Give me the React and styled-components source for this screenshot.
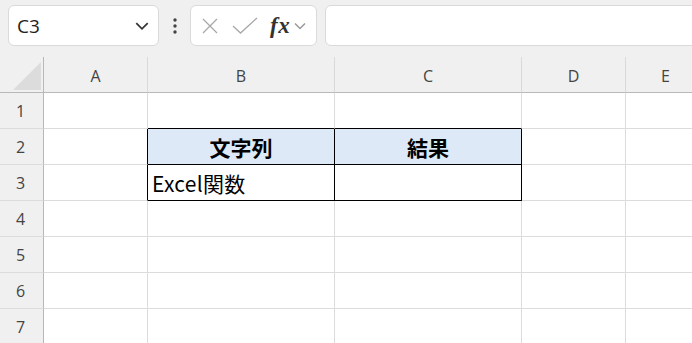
import React from "react";
import styled, { createGlobalStyle } from "styled-components";

const GlobalStyle = createGlobalStyle`
  html, body {
    margin: 0;
    padding: 0;
    background: #ffffff;
    overflow: hidden;
  }
  body {
    font-family: "Open Sans", "Noto Sans", sans-serif;
  }
`;

const columns = ["A", "B", "C", "D", "E"];
const colWidths = [104, 187, 187, 104, 80];
const rowCount = 7;

// B2:C3 is the boxed table
const inTable = (r, c) => r >= 2 && r <= 3 && c >= 1 && c <= 2;

const cellData = {
  "2-1": { text: "文字列", head: true },
  "2-2": { text: "結果", head: true },
  "3-1": { text: "Excel関数" },
};

const Page = styled.div`
  width: 692px;
  height: 343px;
  overflow: hidden;
  background: #ffffff;
`;

const Toolbar = styled.div`
  height: 57px;
  box-sizing: border-box;
  padding: 5px 0 0 8px;
  background: #f0f0f0;
  display: flex;
  align-items: flex-start;
`;

const Box = styled.div`
  height: 41px;
  box-sizing: border-box;
  background: #ffffff;
  border: 1px solid #dadada;
  border-radius: 6px;
  display: flex;
  align-items: center;
`;

const NameBox = styled(Box)`
  width: 151px;
  padding: 0 8px 0 8px;
  justify-content: space-between;
  font-size: 19px;
  color: #222;
`;

const Dots = styled.div`
  width: 31px;
  height: 41px;
  display: flex;
  align-items: center;
  justify-content: center;
`;

const FxBox = styled(Box)`
  width: 127px;
  padding: 0 0 0 8px;
`;

const Fx = styled.span`
  font-family: "Liberation Serif", "DejaVu Serif", serif;
  font-style: italic;
  font-weight: bold;
  font-size: 23px;
  color: #333;
  margin: 0 3px 0 12px;
  letter-spacing: 0.5px;
`;

const FormulaInput = styled(Box)`
  flex: 1;
  margin-left: 8px;
  margin-right: -20px;
`;

const Grid = styled.div`
  display: grid;
  grid-template-columns: 44px ${colWidths.map((w) => w + "px").join(" ")};
  grid-auto-rows: 36px;
`;

const Corner = styled.div`
  background: #f0f0f0;
  border-right: 1px solid #b8b8b8;
  border-bottom: 1px solid #b8b8b8;
  box-sizing: border-box;
  position: relative;
`;

const ColHead = styled.div`
  background: #f0f0f0;
  border-right: 1px solid #d9d9d9;
  border-bottom: 1px solid #b8b8b8;
  box-sizing: border-box;
  display: flex;
  align-items: center;
  justify-content: center;
  font-size: 16px;
  color: #444;
  padding-top: 2px;
`;

const RowHead = styled.div`
  background: #f0f0f0;
  border-right: 1px solid #b8b8b8;
  border-bottom: 1px solid #dcdcdc;
  box-sizing: border-box;
  display: flex;
  align-items: center;
  justify-content: center;
  font-size: 16px;
  color: #444;
  padding-right: 2px;
`;

const Cell = styled.div`
  box-sizing: border-box;
  border-right: 1px solid ${(p) => (p.$darkRight ? "#000" : "#dcdcdc")};
  border-bottom: 1px solid ${(p) => (p.$darkBottom ? "#000" : "#dcdcdc")};
  background: ${(p) => (p.$head ? "#dde9f7" : "#ffffff")};
  display: flex;
  align-items: center;
  justify-content: ${(p) => (p.$head ? "center" : "flex-start")};
  padding-left: ${(p) => (p.$head ? "0" : "4px")};
  font-family: "Noto Sans CJK JP", "Noto Sans", sans-serif;
  font-size: 21px;
  letter-spacing: ${(p) => (p.$head ? "0" : "0.3px")};
  font-weight: ${(p) => (p.$head ? 700 : 400)};
  color: #000;
  white-space: nowrap;
  overflow: hidden;
`;

const Chevron = ({ size = 14, color = "#333" }) => (
  <svg width={size} height={size} viewBox="0 0 14 14">
    <path d="M2 4.5 L7 9.5 L12 4.5" fill="none" stroke={color} strokeWidth="1.5" />
  </svg>
);

export default function App() {
  const rows = [];
  for (let r = 1; r <= rowCount; r++) {
    rows.push(<RowHead key={`rh${r}`}>{r}</RowHead>);
    columns.forEach((_, c) => {
      const data = cellData[`${r}-${c}`] || {};
      const inside = inTable(r, c);
      rows.push(
        <Cell
          key={`${r}-${c}`}
          $head={data.head}
          $darkRight={inside || inTable(r, c + 1)}
          $darkBottom={inside || inTable(r + 1, c)}
        >
          {data.text}
        </Cell>
      );
    });
  }

  return (
    <>
      <GlobalStyle />
      <Page>
        <Toolbar>
          <NameBox>
            <span>C3</span>
            <Chevron size={16} color="#333" />
          </NameBox>
          <Dots>
            <svg width="4" height="16" viewBox="0 0 4 16">
              <circle cx="2" cy="2" r="1.7" fill="#444" />
              <circle cx="2" cy="8" r="1.7" fill="#444" />
              <circle cx="2" cy="14" r="1.7" fill="#444" />
            </svg>
          </Dots>
          <FxBox>
            <svg width="18" height="18" viewBox="0 0 18 18" style={{ marginLeft: 2 }}>
              <path d="M2 2 L16 16 M16 2 L2 16" stroke="#a8a8a8" strokeWidth="1.3" fill="none" />
            </svg>
            <svg width="26" height="18" viewBox="0 0 26 18" style={{ marginLeft: 13 }}>
              <path d="M1 9 L8.5 16 L25 1" stroke="#a8a8a8" strokeWidth="1.3" fill="none" />
            </svg>
            <Fx>fx</Fx>
            <Chevron size={14} color="#9a9a9a" />
          </FxBox>
          <FormulaInput />
        </Toolbar>
        <Grid>
          <Corner>
            <svg
              width="28"
              height="28"
              viewBox="0 0 28 28"
              style={{ position: "absolute", left: 13, top: 5 }}
            >
              <path d="M28 0 L28 28 L0 28 Z" fill="#dcdcdc" />
            </svg>
          </Corner>
          {columns.map((c) => (
            <ColHead key={c}>{c}</ColHead>
          ))}
          {rows}
        </Grid>
      </Page>
    </>
  );
}
